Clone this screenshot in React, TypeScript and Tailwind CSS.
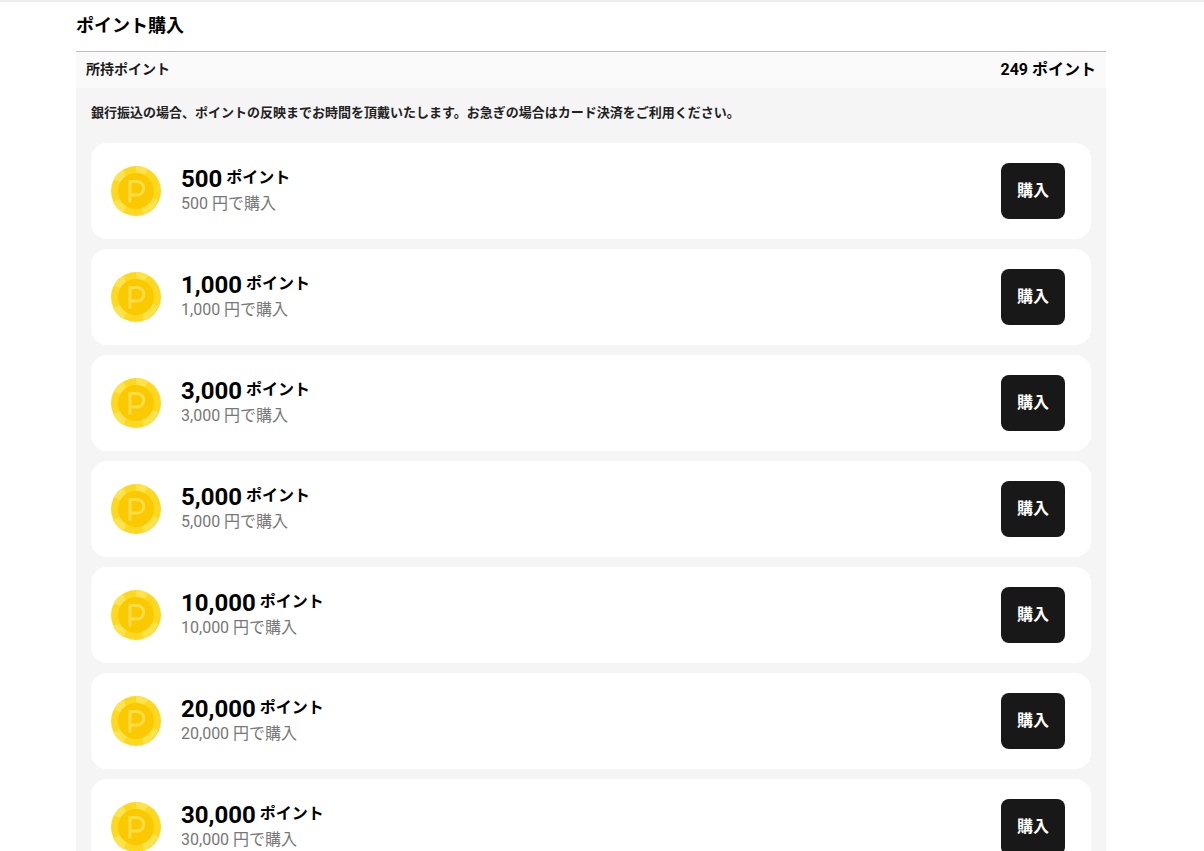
const font = "Roboto, 'Noto Sans CJK JP', sans-serif";

const plans = ["500", "1,000", "3,000", "5,000", "10,000", "20,000", "30,000"];

function Coin() {
  return (
    <svg width="50" height="50" viewBox="0 0 50 50" className="shrink-0">
      <circle cx="25" cy="25" r="25" fill="#fdd821" />
      <path d="M25 0a25 25 0 0 1 12 3l-5 9a15 15 0 0 0-7-2z" fill="#ffe34d" />
      <path d="M3 13a25 25 0 0 1 9-9l4 7a16 16 0 0 0-6 6z" fill="#ffe34d" />
      <path d="M2 36a25 25 0 0 0 10 11l4-7a16 16 0 0 1-7-7z" fill="#ffe34d" />
      <path d="M33 48a25 25 0 0 0 14-14l-8-3a16 16 0 0 1-9 9z" fill="#ffe34d" />
      <circle cx="25" cy="25" r="18" fill="#fbc900" />
      <path
        d="M19 36.500V15.500h7a6.800 6.800 0 0 1 0 13.600h-7"
        fill="none"
        stroke="#fddd4a"
        strokeWidth="3"
      />
    </svg>
  );
}

function PlanCard({ points }: { points: string }) {
  return (
    <div className="flex h-24 items-center justify-between rounded-2xl bg-white pl-5 pr-[26px]">
      <div className="flex items-center gap-5">
        <Coin />
        <div>
          <div className="flex h-[26px] items-center gap-1 font-bold text-black">
            <span className="mb-0.5 text-2xl">{points}</span>
            <span className="mb-1 text-base">ポイント</span>
          </div>
          <div className="h-[22px] text-base leading-[22px] text-[#777777]">{points} 円で購入</div>
        </div>
      </div>
      <button className="h-14 w-16 rounded-lg bg-[#181818] text-base font-bold text-white">購入</button>
    </div>
  );
}

export default function App() {
  return (
    <div className="h-[851px] overflow-hidden bg-white" style={{ fontFamily: font }}>
      <div className="h-0.5 bg-[#ececec]" />
      <div className="ml-[76px] w-[1030px]">
        <h1 className="flex h-[49px] items-center pb-0.5 text-lg font-bold text-black">ポイント購入</h1>
        <div className="flex h-[37px] items-center justify-between border-t border-[#bdbdbd] bg-[#fafafa] px-2.5">
          <span className="mb-0.5 text-sm font-bold text-[#1a1a1a]">所持ポイント</span>
          <span className="text-base font-bold text-black">249 ポイント</span>
        </div>
        <div className="bg-[#f5f5f5] px-[15px] pt-4">
          <p className="mb-5 h-[19px] text-[13px] leading-[18px] font-bold text-[#222222]">
            銀行振込の場合、ポイントの反映までお時間を頂戴いたします。お急ぎの場合はカード決済をご利用ください。
          </p>
          <div className="flex flex-col gap-2.5 pb-5">
            {plans.map((p) => (
              <PlanCard key={p} points={p} />
            ))}
          </div>
        </div>
      </div>
    </div>
  );
}
